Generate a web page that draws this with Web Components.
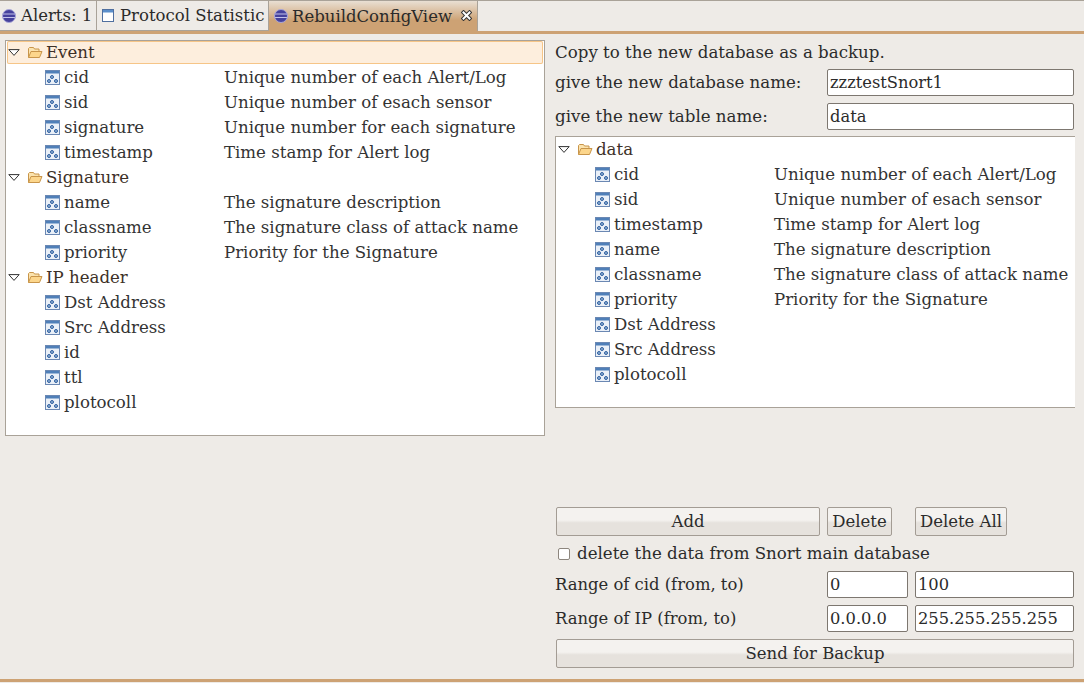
<!DOCTYPE html>
<html>
<head>
<meta charset="utf-8">
<style>
html, body { margin: 0; padding: 0; background: #eeebe7; }
body { font: 16.5px "DejaVu Serif", serif; color: #2b2b2b; }
</style>
</head>
<body>
<rebuild-app>
  <view-tabs slot="tabs">
    <view-tab icon="orb">Alerts: 1</view-tab>
    <view-tab icon="win" style="width:172px">Protocol Statistic</view-tab>
    <view-tab icon="orb" active>RebuildConfigView</view-tab>
  </view-tabs>

  <tree-view slot="left" style="height:396px">
    <tree-row folder>Event</tree-row>
    <tree-row desc="Unique number of each Alert/Log">cid</tree-row>
    <tree-row desc="Unique number of esach sensor">sid</tree-row>
    <tree-row desc="Unique number for each signature">signature</tree-row>
    <tree-row desc="Time stamp for Alert log">timestamp</tree-row>
    <tree-row folder plain>Signature</tree-row>
    <tree-row desc="The signature description">name</tree-row>
    <tree-row desc="The signature class of attack name">classname</tree-row>
    <tree-row desc="Priority for the Signature">priority</tree-row>
    <tree-row folder plain>IP header</tree-row>
    <tree-row>Dst Address</tree-row>
    <tree-row>Src Address</tree-row>
    <tree-row>id</tree-row>
    <tree-row>ttl</tree-row>
    <tree-row>plotocoll</tree-row>
  </tree-view>

  <backup-form slot="right"></backup-form>
</rebuild-app>

<script>
const ORB = `<svg width="14" height="14" viewBox="0 0 14 14"><circle cx="7" cy="7" r="6.5" fill="#45419c"/><path d="M.8 5h12.400M.6 8.500h12.800" stroke="#c3c2ea" stroke-width="1"/><circle cx="7" cy="7" r="6.500" fill="none" stroke="#a9a7d8" stroke-width="1"/></svg>`
const WIN = `<svg width="12" height="13" viewBox="0 0 12 13"><rect x=".5" y=".5" width="11" height="12" fill="#fff" stroke="#4f6f9f"/><rect x="1" y="1" width="10" height="2.5" fill="#5b8fcb"/></svg>`
const CLOSE = `<svg width="11" height="11" viewBox="0 0 11 11"><path d="M2.5 2.5l6 6M8.500 2.500l-6 6" stroke="#333" stroke-width="4" stroke-linecap="square"/><path d="M2.500 2.500l6 6M8.500 2.500l-6 6" stroke="#fff" stroke-width="2" stroke-linecap="square"/></svg>`
const FOLDER = `<svg width="16" height="13" viewBox="0 0 16 13"><path d="M1.500 11.500V2.500l1-1h4l1 1.500h4.500v2" fill="#fbe3ae" stroke="#c8954a"/><path d="M1.500 11.500l2.500-6h11l-2.500 6z" fill="#fcd68c" stroke="#c8954a"/></svg>`
const FIELD = `<svg width="15" height="15" viewBox="0 0 15 15"><rect x=".5" y=".5" width="14" height="14" fill="#eaf0f8" stroke="#6b88b3"/><rect x="1" y="1" width="13" height="2.500" fill="#4f7fb8"/><circle cx="7" cy="7" r="1.500" fill="#8fb0d6" stroke="#2f5f9f"/><circle cx="4" cy="11" r="1.500" fill="#8fb0d6" stroke="#2f5f9f"/><circle cx="11" cy="11" r="1.500" fill="#8fb0d6" stroke="#2f5f9f"/></svg>`

class RebuildApp extends HTMLElement {
    constructor() {
        super()
        this.attachShadow({mode: "open"})
        this.shadowRoot.innerHTML = `
        <style>
            :host { display: flex; flex-direction: column; width: 1084px; height: 683px; overflow: hidden; }
            .band { height: 3px; background: #cda274; flex: none; }
            main { flex: 1; display: grid; grid-template-columns: 540px 1fr; column-gap: 10px; padding: 6px 10px 0 5px; min-height: 0; }
            footer { height: 3px; background: #cda274; margin-bottom: 1px; flex: none; }
        </style>
        <slot name="tabs"></slot>
        <div class="band"></div>
        <main>
            <div><slot name="left"></slot></div>
            <div><slot name="right"></slot></div>
        </main>
        <footer></footer>`
    }
}

class ViewTabs extends HTMLElement {
    constructor() {
        super()
        this.attachShadow({mode: "open"})
        this.shadowRoot.innerHTML = `
        <style>
            :host { display: flex; box-sizing: border-box; height: 31px; border-top: 1px solid #a9a298; flex: none; }
        </style>
        <slot></slot>`
    }
}

class ViewTab extends HTMLElement {
    constructor() {
        super()
        this.attachShadow({mode: "open"})
        const active = this.hasAttribute("active")
        const kind = this.getAttribute("icon")
        this.shadowRoot.innerHTML = `
        <style>
            :host { display: flex; align-items: center; box-sizing: border-box; height: 30px; padding-left: 2px; gap: 5px;
                    border-right: 1px solid #a9a298; border-bottom: 1px solid #a9a298; white-space: nowrap; font-size: 16.500px; color: #2a2a2a; }
            :host([active]) { width: 209px; gap: 4px; padding-left: 5px; border-bottom: 0; background: linear-gradient(#e9dfd3, #cda274 65%); }
            :host([icon="win"]) { padding-left: 5px; gap: 6px; }
            :host(:first-child) { width: 97px; }
            .close { position: absolute; left: 461px; top: 10px; display: flex; }
            .icon { display: flex; }
        </style>
        <span class="icon">${kind == "orb" ? ORB : WIN}</span><slot></slot>
        ${active ? `<span class="close">${CLOSE}</span>` : ""}`
    }
}

class TreeView extends HTMLElement {
    constructor() {
        super()
        this.attachShadow({mode: "open"})
        this.shadowRoot.innerHTML = `
        <style>
            :host { display: block; box-sizing: border-box; background: #fff; border: 1px solid #a9a298; padding: 0 1px; overflow: hidden; }
            :host([open-right]) { border-right: 0; padding: 1px 0 0 1px; }
        </style>
        <slot></slot>`
    }
}

class TreeRow extends HTMLElement {
    constructor() {
        super()
        this.attachShadow({mode: "open"})
        const folder = this.hasAttribute("folder")
        const desc = this.getAttribute("desc") || ""
        this.shadowRoot.innerHTML = `
        <style>
            :host { display: flex; align-items: center; box-sizing: border-box; height: 23px; margin-bottom: 2px; white-space: nowrap; font-size: 16.600px; color: #333; }
            :host([folder]) { color: #3d3027; }
            :host([folder]:not([plain])) { background: #fdeedd; box-shadow: inset 0 0 0 1px #f6c587; border-radius: 2px; }
            .tw { width: 12px; height: 7px; margin: 0 7px 0 1px; }
            .ic { display: flex; margin-right: 3px; }
            .leaf { margin-left: 38px; margin-right: 4px; }
            .name { width: 160px; }
            :host([folder]) .name { width: auto; }
        </style>
        ${folder
            ? `<svg class="tw" viewBox="0 0 12 7"><path d="M.8.6h10.400L6 6.400z" fill="#fff" stroke="#333"/></svg><span class="ic">${FOLDER}</span><span class="name"><slot></slot></span>`
            : `<span class="ic leaf">${FIELD}</span><span class="name"><slot></slot></span><span>${desc}</span>`}`
    }
}

class UiButton extends HTMLElement {
    constructor() {
        super()
        this.attachShadow({mode: "open"})
        this.shadowRoot.innerHTML = `
        <style>
            :host { display: flex; align-items: center; justify-content: center; box-sizing: border-box; height: 29px; border: 1px solid #a39c94; border-radius: 2px;
                    background: linear-gradient(#f4f2ef 45%, #e6e2dd 55%, #e6e2dd); font-size: 16.500px; color: #2b2b2b; white-space: nowrap; }
        </style>
        <slot></slot>`
    }
}

class UiField extends HTMLElement {
    constructor() {
        super()
        this.attachShadow({mode: "open"})
        this.shadowRoot.innerHTML = `
        <style>
            :host { display: flex; align-items: center; box-sizing: border-box; height: 27px; padding: 0 2px 1px; background: #fff; border: 1px solid #7d7770; border-radius: 2px;
                    font-size: 16.300px; color: #2b2b2b; white-space: nowrap; overflow: hidden; }
        </style>
        <slot></slot>`
    }
}

class BackupForm extends HTMLElement {
    constructor() {
        super()
        this.attachShadow({mode: "open"})
        this.shadowRoot.innerHTML = `
        <style>
            :host { display: flex; flex-direction: column; width: 519px; font-size: 16.650px; color: #2b2b2b; }
            .title { height: 28px; line-height: 26px; white-space: nowrap; }
            .row { display: grid; grid-template-columns: 272px 1fr; align-items: center; white-space: nowrap; margin-top: 7px; }
            .row.two { grid-template-columns: 272px 81px 1fr; font-size: 16.400px; }
            .row.two ui-field + ui-field { margin-left: 7px; }
            .buttons { display: grid; grid-template-columns: 264px 65px 92px; column-gap: 7px; margin: 99px 0 0 1px; }
            .buttons ui-button:last-child { margin-left: 16px; width: 92px; }
            .check { display: flex; align-items: center; gap: 7px; height: 29px; margin: 3px 0 -4px 3px; white-space: nowrap; }
            .box { width: 10px; height: 10px; border: 1px solid #8d867e; border-radius: 2px; background: #fff; }
            .send { margin: 7px 0 0 1px; width: 518px; }
        </style>
        <div class="title">Copy to the new database as a backup.</div>
        <div class="row" style="margin-top:1px"><span>give the new database name:</span><ui-field>zzztestSnort1</ui-field></div>
        <div class="row"><span>give the new table name:</span><ui-field>data</ui-field></div>
        <tree-view open-right style="height:272px;margin-top:6px;width:520px">
            <tree-row folder plain>data</tree-row>
            <tree-row desc="Unique number of each Alert/Log">cid</tree-row>
            <tree-row desc="Unique number of esach sensor">sid</tree-row>
            <tree-row desc="Time stamp for Alert log">timestamp</tree-row>
            <tree-row desc="The signature description">name</tree-row>
            <tree-row desc="The signature class of attack name">classname</tree-row>
            <tree-row desc="Priority for the Signature">priority</tree-row>
            <tree-row>Dst Address</tree-row>
            <tree-row>Src Address</tree-row>
            <tree-row>plotocoll</tree-row>
        </tree-view>
        <div class="buttons"><ui-button>Add</ui-button><ui-button>Delete</ui-button><ui-button>Delete All</ui-button></div>
        <div class="check"><span class="box"></span><span>delete the data from Snort main database</span></div>
        <div class="row two"><span>Range of cid (from, to)</span><ui-field>0</ui-field><ui-field>100</ui-field></div>
        <div class="row two"><span>Range of IP (from, to)</span><ui-field>0.0.0.0</ui-field><ui-field>255.255.255.255</ui-field></div>
        <ui-button class="send">Send for Backup</ui-button>`
    }
}

customElements.define("rebuild-app", RebuildApp)
customElements.define("view-tabs", ViewTabs)
customElements.define("view-tab", ViewTab)
customElements.define("tree-view", TreeView)
customElements.define("tree-row", TreeRow)
customElements.define("ui-button", UiButton)
customElements.define("ui-field", UiField)
customElements.define("backup-form", BackupForm)
</script>
</body>
</html>
